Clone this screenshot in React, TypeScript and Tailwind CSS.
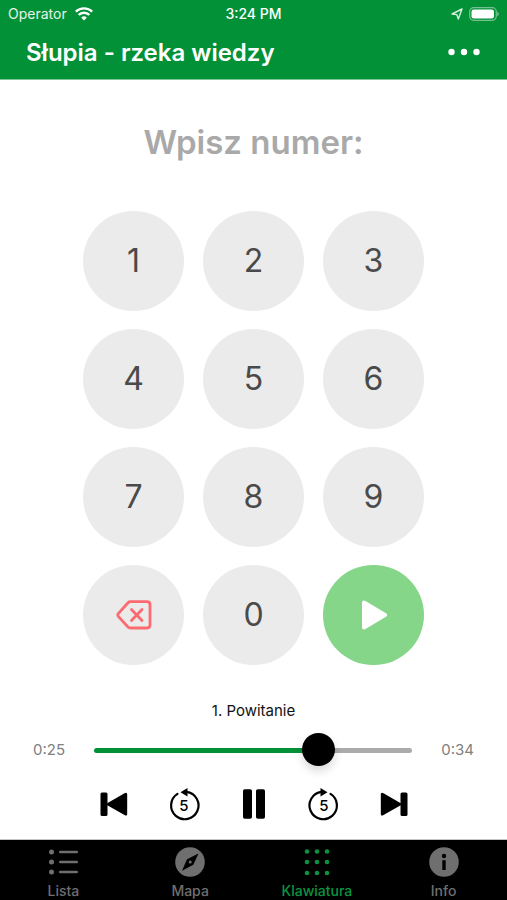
import { useState } from "react"
import type { CSSProperties, ReactNode } from "react"
import clsx from "clsx"

const TRACK_LENGTH = 34

const digits = ["1", "2", "3", "4", "5", "6", "7", "8", "9"]

const tabs: { label: string; icon: ReactNode }[] = [
  { label: "Lista", icon: <ListIcon /> },
  { label: "Mapa", icon: <CompassIcon /> },
  { label: "Klawiatura", icon: <KeypadIcon /> },
  { label: "Info", icon: <InfoIcon /> },
]

export default function App() {
  const [tab, setTab] = useState("Klawiatura")

  return (
    <div className="flex min-h-screen flex-col bg-white font-['Inter',sans-serif] text-black">
      <Header />
      <main className="flex flex-1 flex-col items-center">
        <h2 className="mt-10 text-[33px] leading-11 font-semibold text-[#a9a9a9]">Wpisz numer:</h2>
        <Keypad />
        <Player />
      </main>

      <nav className="grid h-[61px] grid-cols-4 border-t border-[#c4c4c4] bg-black">
        {tabs.map(({ label, icon }) => (
          <button
            key={label}
            type="button"
            onClick={() => setTab(label)}
            className={clsx(
              "flex flex-col items-center gap-1 pt-[7px] text-sm font-medium",
              tab === label ? "text-[#0a9440]" : "text-[#6f6f6f]",
            )}
          >
            {icon}
            {label}
          </button>
        ))}
      </nav>
    </div>
  )
}

function Header() {
  return (
    <header className="border-b border-[#7cc796] bg-[#029137] text-white">
      {/* Status bar */}
      <div className="grid h-7 grid-cols-3 items-center px-2 text-sm">
        <div className="flex items-center gap-2">
          <span className="text-white/90">Operator</span>
          <WifiIcon />
        </div>
        <span className="text-center font-medium">3:24 PM</span>
        <div className="flex items-center justify-end gap-1.5">
          <LocationIcon />
          <BatteryIcon />
        </div>
      </div>

      {/* Title row */}
      <div className="flex h-[51px] items-center justify-between pr-6 pb-px pl-[26px]">
        <h1 className="text-2xl font-semibold">Słupia - rzeka wiedzy</h1>
        <button type="button" aria-label="Menu">
          <svg width="38" height="20" viewBox="0 0 38 20" fill="currentColor">
            <circle cx="6.500" cy="9" r="3.200" />
            <circle cx="19" cy="9" r="3.200" />
            <circle cx="31.500" cy="9" r="3.200" />
          </svg>
        </button>
      </div>
    </header>
  )
}

function Keypad() {
  return (
    <div className="mt-[47px] grid grid-cols-3 gap-x-[19px] gap-y-[18px]">
      {digits.map((d) => (
        <Key key={d}>{d}</Key>
      ))}
      <Key label="Usuń">
        <svg width="36" height="32" viewBox="0 0 36 32" fill="none" stroke="#fb6b70" strokeWidth="2.800" strokeLinecap="round" strokeLinejoin="round">
          <path d="M14.500 2.700H31Q34 2.700 34 5.700V26Q34 29 31 29H14.500Q13 29 12 28L2.300 17.400Q1.300 16 2.300 14.600L12 3.700Q13 2.700 14.500 2.700Z" />
          <path d="M15.500 10.500l10.500 11M26 10.500l-10.500 11" />
        </svg>
      </Key>
      <Key>0</Key>
      <Key label="Odtwórz" color="bg-[#86d68a]">
        <svg width="30" height="30" viewBox="0 0 30 30" fill="#fff" stroke="#fff" strokeWidth="4" strokeLinejoin="round">
          <path d="M5 2.500V27.500L26 15Z" />
        </svg>
      </Key>
    </div>
  )
}

function Key({ children, label, color = "bg-[#ebebeb]" }: { children: ReactNode; label?: string; color?: string }) {
  return (
    <button
      type="button"
      aria-label={label}
      className={clsx("flex h-[100px] w-[101px] items-center justify-center rounded-full text-[32px] text-[#4a4a4a]", color)}
    >
      {children}
    </button>
  )
}

function Player() {
  const [position, setPosition] = useState(24.8)
  const played = `${(position / TRACK_LENGTH) * 100}%`

  return (
    <section className="flex w-full flex-col items-center pt-[34px]">
      <p className="text-[15px] leading-6 text-[#111]">1. Powitanie</p>

      <div className="mt-[9px] flex h-9 w-full items-center justify-between px-[33px] text-[15px] text-[#808080]">
        <span>0:25</span>
        <input
          type="range"
          aria-label="Pozycja"
          min={0}
          max={TRACK_LENGTH}
          step={0.1}
          value={position}
          onChange={(e) => setPosition(Number(e.target.value))}
          style={{ "--played": played } as CSSProperties}
          className="mx-[29px] h-9 min-w-0 flex-1 appearance-none bg-transparent [&::-webkit-slider-runnable-track]:h-[5px] [&::-webkit-slider-runnable-track]:rounded-full [&::-webkit-slider-runnable-track]:bg-[linear-gradient(to_right,#029137_var(--played),#ababab_var(--played))] [&::-webkit-slider-thumb]:-mt-[15px] [&::-webkit-slider-thumb]:size-[33px] [&::-webkit-slider-thumb]:appearance-none [&::-webkit-slider-thumb]:rounded-full [&::-webkit-slider-thumb]:bg-black [&::-webkit-slider-thumb]:shadow-[0_5px_10px_rgba(0,0,0,0.15)]"
        />
        <span>0:34</span>
      </div>

      <div className="mt-[18px] mb-[17px] flex gap-[34px]">
        <button type="button" aria-label="Poprzedni">
          <SkipIcon />
        </button>
        <button type="button" aria-label="Cofnij 5 sekund">
          <SeekIcon back />
        </button>
        <button type="button" aria-label="Pauza">
          <svg width="36" height="36" viewBox="0 0 36 36">
            <rect x="7" y="3.300" width="9" height="29.500" rx="1.800" />
            <rect x="20" y="3.300" width="9" height="29.500" rx="1.800" />
          </svg>
        </button>
        <button type="button" aria-label="Naprzód 5 sekund">
          <SeekIcon />
        </button>
        <button type="button" aria-label="Następny">
          <SkipIcon next />
        </button>
      </div>
    </section>
  )
}

function SkipIcon({ next = false }: { next?: boolean }) {
  return (
    <svg width="36" height="36" viewBox="0 0 36 36">
      <g transform={next ? "matrix(-1 0 0 1 36 0)" : undefined}>
        <rect x="4.500" y="6.500" width="7" height="23.500" rx="1.500" />
        <path d="M9.500 18.200L28.500 7.300Q31.200 6 31.200 8.500V28Q31.200 30.500 28.500 29.100Z" />
      </g>
    </svg>
  )
}

function SeekIcon({ back = false }: { back?: boolean }) {
  return (
    <svg width="36" height="36" viewBox="0 0 36 36">
      <g transform={back ? undefined : "matrix(-1 0 0 1 36 0)"}>
        <path d="M20.500 5.900A13.700 13.700 0 1 1 11.500 7.900" fill="none" stroke="#000" strokeWidth="2.200" strokeLinecap="round" />
        <path d="M14.500 6.200L21.500 2V10.500Z" />
      </g>
      <text x="18" y="24.500" textAnchor="middle" fontSize="15" fontWeight="500">
        5
      </text>
    </svg>
  )
}

function WifiIcon() {
  return (
    <svg width="18" height="14" viewBox="0 0 18 14" fill="none" stroke="#fff" strokeWidth="2.400">
      <path d="M0.800 4.700A11.800 11.800 0 0 1 17.200 4.700" />
      <path d="M3.700 7.900A7.500 7.500 0 0 1 14.300 7.900" />
      <path d="M9 13.600L6.200 10.700A4 4 0 0 1 11.800 10.700Z" fill="#fff" stroke="none" />
    </svg>
  )
}

function LocationIcon() {
  return (
    <svg width="12" height="12" viewBox="0 0 12 12" fill="none" stroke="#d5eedd" strokeWidth="1.400" strokeLinejoin="round">
      <path d="M11 1L1 6L5.800 6.600L7.300 11Z" />
    </svg>
  )
}

function BatteryIcon() {
  return (
    <svg width="30" height="14" viewBox="0 0 30 14">
      <rect x="0.700" y="0.700" width="26.600" height="12.600" rx="4" fill="none" stroke="#fff" strokeOpacity="0.450" strokeWidth="1.200" />
      <rect x="2.500" y="2.500" width="22.500" height="9" rx="2.200" fill="#fff" />
      <path d="M28.300 4.700Q29.800 5.500 29.800 7T28.300 9.300Z" fill="#fff" fillOpacity="0.500" />
    </svg>
  )
}

function ListIcon() {
  return (
    <svg width="30" height="30" viewBox="0 0 30 30" fill="currentColor">
      {[5, 15, 25].map((y) => (
        <g key={y}>
          <circle cx="3.500" cy={y} r="2.500" />
          <rect x="11" y={y - 1.200} width="19" height="2.400" rx="1.200" />
        </g>
      ))}
    </svg>
  )
}

function CompassIcon() {
  return (
    <svg width="30" height="30" viewBox="0 0 30 30" fill="currentColor">
      <circle cx="15" cy="15" r="14.800" />
      <path d="M23.500 6.500L18.300 17.800L7 23.700L12 12.300Z" fill="#000" />
      <circle cx="15.200" cy="15" r="1.500" />
    </svg>
  )
}

function KeypadIcon() {
  return (
    <svg width="30" height="30" viewBox="0 0 30 30" fill="currentColor">
      {[4.500, 15, 26].map((y) => [5, 15, 25].map((x) => <circle key={`${x}-${y}`} cx={x} cy={y} r="2.300" />))}
    </svg>
  )
}

function InfoIcon() {
  return (
    <svg width="30" height="30" viewBox="0 0 30 30" fill="currentColor">
      <circle cx="15" cy="15" r="14.800" />
      <circle cx="15" cy="9" r="2.200" fill="#000" />
      <path d="M13.300 13.200H16.700V23H13.300Z" fill="#000" />
    </svg>
  )
}
